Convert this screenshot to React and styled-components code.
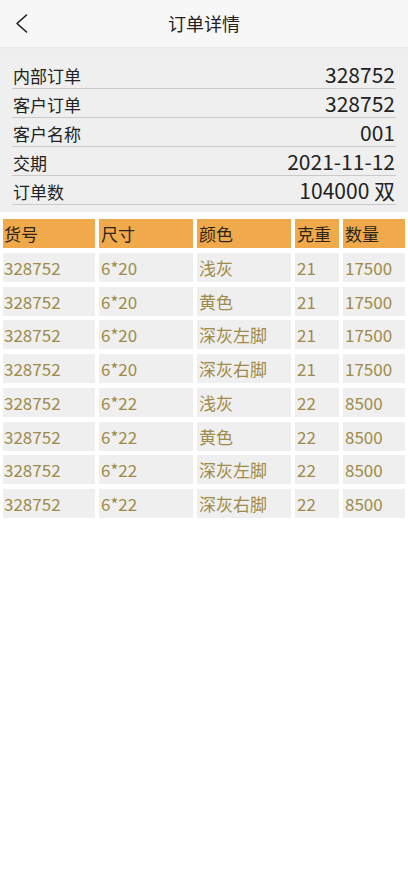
import React from "react";
import styled, { createGlobalStyle } from "styled-components";

const Global = createGlobalStyle`
  html, body { margin: 0; padding: 0; background: #ffffff; }
  body { font-family: "Noto Sans CJK SC", "Noto Sans", sans-serif; }
  * { box-sizing: border-box; }
`;

const Page = styled.div`
  width: 408px;
  min-height: 883px;
  background: #ffffff;
  display: flex;
  flex-direction: column;
`;

const TopBar = styled.header`
  height: 47px;
  background: #f7f7f7;
  display: grid;
  grid-template-columns: 60px 1fr 60px;
  align-items: center;
`;

const BackButton = styled.button`
  border: none;
  background: transparent;
  padding: 0 0 0 15px;
  height: 47px;
  display: flex;
  align-items: center;
  cursor: pointer;
`;

const Title = styled.h1`
  margin: 0;
  font-size: 18px;
  font-weight: 400;
  color: #222;
  text-align: center;
  line-height: 47px;
`;

const InfoPanel = styled.section`
  background: #efefef;
  padding: 13px 12px 7px 12px;
  box-shadow: inset 0 2px 3px -2px rgba(0, 0, 0, 0.06);
`;

const InfoRow = styled.div`
  height: 29px;
  display: flex;
  align-items: center;
  justify-content: space-between;
  border-bottom: 1px solid #c9c9c9;
  padding: 0 1px 0 1px;
`;

const InfoLabel = styled.span`
  font-size: 17px;
  color: #222;
  line-height: 1;
  padding-top: 2px;
`;

const InfoValue = styled.span`
  font-size: 21px;
  color: #222;
  line-height: 1;
`;

const Table = styled.div`
  margin-top: 7px;
  padding: 0 3px;
  display: grid;
  grid-template-columns: 92px 94px 94px 44px 62px;
  column-gap: 4px;
  row-gap: 4.75px;
`;

const Cell = styled.div`
  height: 29px;
  display: flex;
  align-items: center;
  padding-left: ${(p) => (p.$first ? "1px" : "2px")};
  font-size: 17px;
  line-height: 1;
  white-space: nowrap;
  background: ${(p) => (p.$head ? "#f0aa4c" : "#efefef")};
  color: ${(p) => (p.$head ? "#2b2418" : "#9e8b4a")};
`;

const info = [
  ["内部订单", "328752"],
  ["客户订单", "328752"],
  ["客户名称", "001"],
  ["交期", "2021-11-12"],
  ["订单数", "104000 双"],
];

const head = ["货号", "尺寸", "颜色", "克重", "数量"];

const rows = [
  ["328752", "6*20", "浅灰", "21", "17500"],
  ["328752", "6*20", "黄色", "21", "17500"],
  ["328752", "6*20", "深灰左脚", "21", "17500"],
  ["328752", "6*20", "深灰右脚", "21", "17500"],
  ["328752", "6*22", "浅灰", "22", "8500"],
  ["328752", "6*22", "黄色", "22", "8500"],
  ["328752", "6*22", "深灰左脚", "22", "8500"],
  ["328752", "6*22", "深灰右脚", "22", "8500"],
];

export default function App() {
  return (
    <Page>
      <Global />
      <TopBar>
        <BackButton aria-label="返回">
          <svg width="14" height="22" viewBox="0 0 14 22">
            <polyline
              points="11.5,2 2,10.5 11.5,19"
              fill="none"
              stroke="#1a1a1a"
              strokeWidth="1.6"
              strokeLinecap="round"
              strokeLinejoin="round"
            />
          </svg>
        </BackButton>
        <Title>订单详情</Title>
        <span />
      </TopBar>
      <InfoPanel>
        {info.map(([k, v]) => (
          <InfoRow key={k}>
            <InfoLabel>{k}</InfoLabel>
            <InfoValue>{v}</InfoValue>
          </InfoRow>
        ))}
      </InfoPanel>
      <Table>
        {head.map((h, i) => (
          <Cell key={h} $head $first={i === 0}>
            {h}
          </Cell>
        ))}
        {rows.map((r, ri) =>
          r.map((c, ci) => (
            <Cell key={ri + "-" + ci} $first={ci === 0}>
              {c}
            </Cell>
          ))
        )}
      </Table>
    </Page>
  );
}
